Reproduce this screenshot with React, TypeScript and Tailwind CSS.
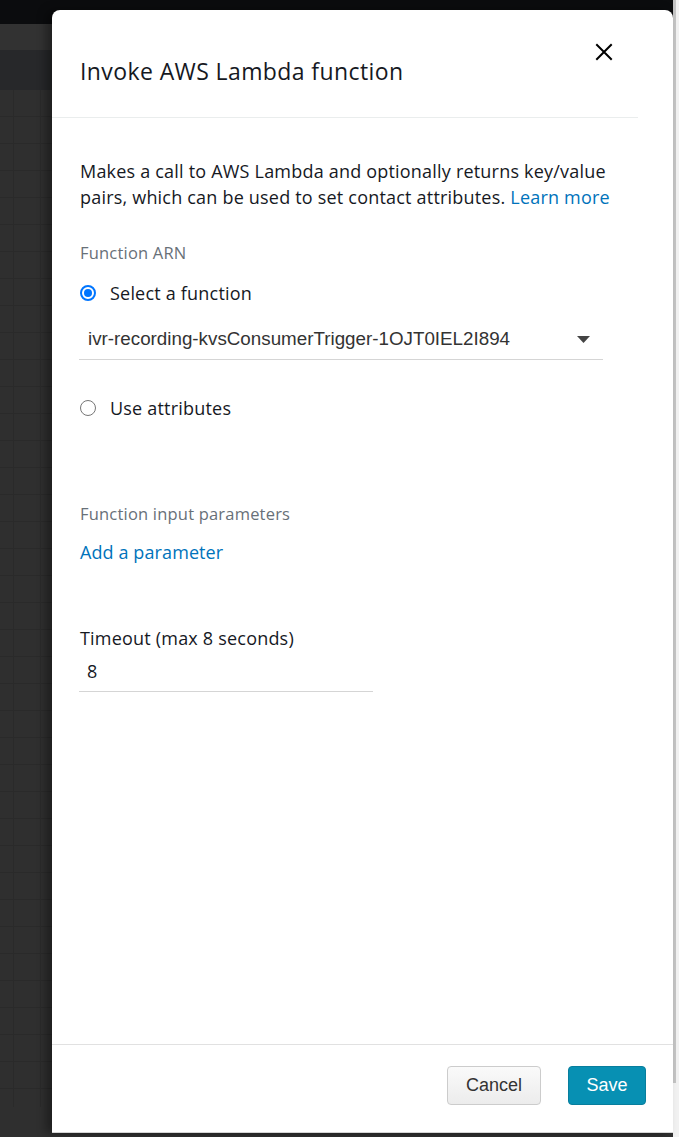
import React from 'react';

const ember = { fontFamily: '"Open Sans", "Noto Sans", sans-serif' };
const arial = { fontFamily: '"Liberation Sans", Arial, sans-serif' };

function Radio({ checked, label }: { checked: boolean; label: string }) {
  return (
    <label className="flex items-center gap-[14px] h-[26px] cursor-pointer">
      {checked ? (
        <span className="w-4 h-4 rounded-full border-2 border-[#0075ff] flex items-center justify-center bg-white">
          <span className="w-[8px] h-[8px] rounded-full bg-[#0075ff]" />
        </span>
      ) : (
        <span className="w-4 h-4 rounded-full border border-[#767676] bg-white" />
      )}
      <span className="text-[18px] leading-[26px] tracking-[0.2px] text-[#16191f]">{label}</span>
    </label>
  );
}

export default function App() {
  return (
    <div
      className="relative w-[679px] h-[1137px] overflow-hidden bg-[#2f2f2f]"
      style={ember}
    >
      {/* Background canvas */}
      <div className="h-[24px] bg-[#0b0c0e]" />
      <div className="h-[26px] bg-[#323232]" />
      <div className="h-[40px] bg-[#27282a]" />
      <div className="h-[1017px] bg-[#2f2f2f] bg-[linear-gradient(to_right,#2a2a2a_1px,transparent_1px),linear-gradient(to_bottom,#2a2a2a_1px,transparent_1px)] bg-[size:27px_27px] bg-[position:13px_26px]" />

      {/* Scrollbar */}
      <div className="absolute top-0 right-0 w-[6px] h-full bg-[#f1f1f1] flex">
        <div className="w-[3px] h-[1083px] bg-[#c4c4c4]" />
      </div>

      {/* Drawer */}
      <div className="absolute left-[52px] top-[10px] w-[621px] h-[1123px] bg-white rounded-t-[8px] border-b border-[#d5d5d5] flex flex-col shadow-[-6px_0_10px_rgba(0,0,0,0.35)]">
        {/* Header */}
        <div className="relative h-[108px] pl-[28px] pt-[46px] mr-[35px] border-b border-[#eaeded]">
          <h1 className="text-[23px] leading-[30px] tracking-[0.4px] text-[#16191f] font-normal">
            Invoke AWS Lambda function
          </h1>
          <button className="absolute left-[543px] top-[33px] w-[18px] h-[18px] flex items-center justify-center">
            <svg width="18" height="18" viewBox="0 0 18 18">
              <path d="M2 2 L16 16 M16 2 L2 16" stroke="#000" strokeWidth="2" strokeLinecap="square" />
            </svg>
          </button>
        </div>

        {/* Body */}
        <div className="flex-1 pl-[28px] pt-[40px] tracking-[0.2px]">
          <p className="text-[18px] leading-[26px] text-[#16191f] w-[545px]">
            Makes a call to AWS Lambda and optionally returns key/value pairs,
            which can be used to set contact attributes.{' '}
            <a className="text-[#0073bb]" href="#">Learn more</a>
          </p>

          <div className="mt-[31px] text-[16.5px] leading-[24px] text-[#687078]">Function ARN</div>

          <div className="mt-[15px]">
            <Radio checked label="Select a function" />
          </div>

          <div
            className="mt-[13px] -ml-px w-[524px] h-[41px] border-b border-[#d5d5d5] flex items-center justify-between pl-[9px] pr-[13px] tracking-normal"
            style={arial}
          >
            <span className="text-[18.8px] text-[#333]">ivr-recording-kvsConsumerTrigger-1OJT0IEL2I894</span>
            <svg width="13" height="7" viewBox="0 0 13 7">
              <path d="M0 0 H13 L6.5 7 Z" fill="#444" />
            </svg>
          </div>

          <div className="mt-[35px]">
            <Radio checked={false} label="Use attributes" />
          </div>

          <div className="mt-[81px] text-[16.5px] leading-[24px] text-[#687078]">
            Function input parameters
          </div>
          <a href="#" className="block mt-[13px] text-[18px] leading-[26px] tracking-[0.1px] text-[#0073bb]">
            Add a parameter
          </a>

          <div className="mt-[60px] text-[18px] leading-[26px] text-[#16191f]">
            Timeout (max 8 seconds)
          </div>
          <div className="-ml-px w-[294px] h-[41px] border-b border-[#d5d5d5] flex items-center pl-[8px]">
            <span className="text-[18px] text-[#16191f]">8</span>
          </div>
        </div>

        {/* Footer */}
        <div className="h-[88px] border-t border-[#e1e1e1] flex items-start justify-end gap-[27px] pt-[21px] pr-[27px]" style={arial}>
          <button className="w-[94px] h-[39px] rounded-[4px] border border-[#cccccc] bg-[linear-gradient(to_bottom,#fafafa,#ececec)] text-[18px] text-[#333]">
            Cancel
          </button>
          <button className="w-[78px] h-[39px] rounded-[4px] border border-[#087e9d] bg-[#0790b3] text-[18px] text-white">
            Save
          </button>
        </div>
      </div>
    </div>
  );
}
